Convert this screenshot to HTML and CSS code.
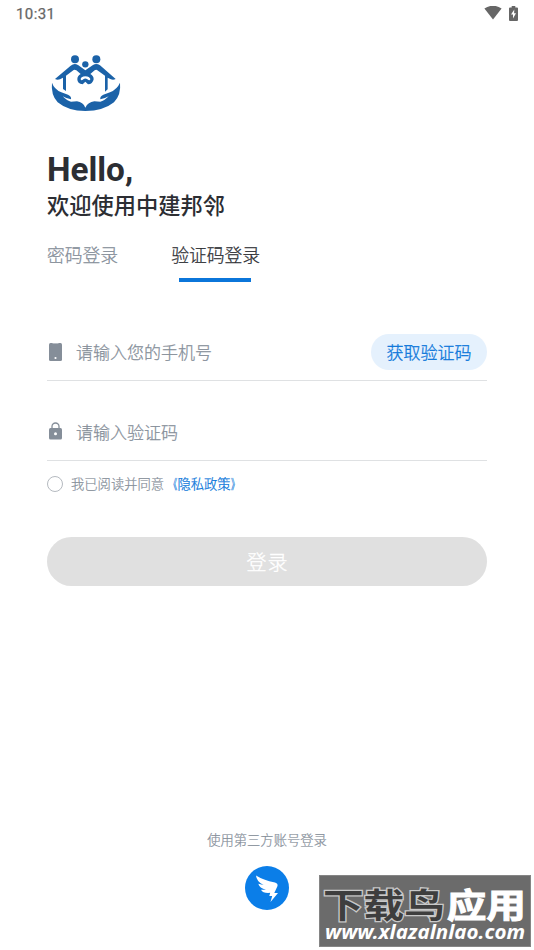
FILE: index.html
```html
<!DOCTYPE html>
<html lang="zh-CN">
<head>
<meta charset="utf-8">
<title>登录</title>
<link rel="stylesheet" href="styles.css">
</head>
<body>
<div class="screen">
  <header class="status">
    <span class="clock">10:31</span>
    <span class="status-icons">
      <svg width="18" height="14" viewBox="0 0 18 14"><path d="M.4 2.6Q9-3.2 17.6 2.6L9 13.6Z" fill="#666"/></svg>
      <svg width="9" height="15" viewBox="0 0 9 15"><path d="M2.7 0h3.6v1.4H8q1 0 1 1V14q0 1-1 1H1q-1 0-1-1V2.4q0-1 1-1h1.700Z" fill="#666"/><path d="M5.300 3.500 2 8.600h2v4L7 7.300H5.100Z" fill="#fff"/></svg>
    </span>
  </header>
  <main class="content">
    <svg class="logo" viewBox="30 24 216 180" fill="#1b62a8">
      <circle cx="105" cy="43" r="12"/><circle cx="169" cy="43" r="12"/><circle cx="136" cy="58" r="9.500"/>
      <path d="M45 102 92 62Q103 53 114 60L136 76 159 60Q169 53 180 61L227 102Q219 106 211 102L203 98V133L195 140V92L171 75Q168 73 164 76L151 87Q161 92 161 103Q158 118 144 118L136 110 128 118Q112 117 112 103Q112 92 122 87L109 76Q104 73 101 75L78 92V138L69 132V98L60 103Q52 106 45 102ZM136 94Q122 95 122 103Q124 109 130 103Q136 98 142 103Q150 109 151 102Q149 95 136 94Z" fill-rule="evenodd"/>
      <path d="M36 113Q42 132 64 142L84 149Q95 154 93 163Q82 162 68 154Q82 168 93 170Q103 169 111 169Q129 171 136 188Q144 171 163 169Q171 169 181 170Q192 168 206 154Q192 162 181 163Q179 154 190 149L210 142Q232 132 240 113Q244 148 222 172Q190 198 136 198Q84 198 53 172Q32 149 36 113Z"/>
    </svg>
    <h1 class="hello">Hello,</h1>
    <p class="welcome">欢迎使用中建邦邻</p>
    <nav class="tabs">
      <span class="tab">密码登录</span>
      <span class="tab active">验证码登录</span>
    </nav>
    <div class="field phone">
      <svg class="field-icon" viewBox="0 0 13 18"><path d="M1.500 0h10Q13 0 13 1.500v15q0 1.500-1.500 1.500h-10Q0 18 0 16.500v-15Q0 0 1.500 0Z" fill="#858e99"/><path d="M3.500 0h6v.8h-6Z" fill="#c4c9ce"/><circle cx="6.500" cy="15" r="1.100" fill="#fff"/></svg>
      <span class="placeholder">请输入您的手机号</span>
      <span class="get-code">获取验证码</span>
    </div>
    <div class="field code">
      <svg class="field-icon" viewBox="0 0 13 18"><path d="M3 7V4.500a3.500 3.500 0 0 1 7 0V7" fill="none" stroke="#858e99" stroke-width="1.300"/><rect y="6" width="13" height="11.500" rx="1.500" fill="#858e99"/><circle cx="6.500" cy="11.700" r="1.500" fill="#fff"/></svg>
      <span class="placeholder">请输入验证码</span>
    </div>
    <div class="agree">
      <span class="radio"></span>
      <span>我已阅读并同意<span class="link"><span class="mark open">《</span>隐私政策<span class="mark">》</span></span></span>
    </div>
    <div class="submit">登录</div>
  </main>
  <footer class="third">
    <span>使用第三方账号登录</span>
    <svg class="ding" viewBox="0 0 44 44"><circle cx="22" cy="22" r="22" fill="#0b7ee8"/><path d="M11 9.500Q18 14 30 16.500Q33.500 17.500 32.300 20.500L29.300 27H33L25.500 36L27.200 30H24.300L25.200 26.800Q18 27.500 16 23.700L21 23.800Q14.500 22 13.300 17.700L18.500 19Q11.500 15.500 11 9.500Z" fill="#fff"/></svg>
  </footer>
  <div class="watermark">
    <svg viewBox="0 0 212 72">
      <g class="wm-title">
        <text class="wm-dark" x="3" y="42" textLength="123" lengthAdjust="spacingAndGlyphs">下载鸟</text>
        <text class="wm-light" x="128" y="42" textLength="80" lengthAdjust="spacingAndGlyphs">应用</text>
      </g>
      <text class="wm-url" x="5" y="64" textLength="202" lengthAdjust="spacingAndGlyphs">www.xlazalnlao.com</text>
    </svg>
  </div>
</div>
</body>
</html>
```
FILE: styles.css
```css
* { box-sizing: border-box; }
body {
  margin: 0;
  background: #fff;
  color: #2c2e33;
  font-family: Roboto, "Noto Sans CJK SC", sans-serif;
  font-weight: 300;
}
svg { display: block; }
.screen {
  position: relative;
  display: flex;
  flex-direction: column;
  width: 534px;
  height: 950px;
  overflow: hidden;
}
.status {
  display: flex;
  justify-content: space-between;
  height: 28px;
  padding: 6px 16px 0;
  color: #666;
}
.clock { font-size: 15px; line-height: 17px; letter-spacing: .4px; font-weight: 400; -webkit-text-stroke: .25px; }
.status-icons { display: flex; gap: 7px; }
.content { padding: 25px 47px 0; }
.logo { width: 72px; height: 60px; margin-left: 3px; }
.hello { margin: 38px 0 0; font-size: 33.300px; line-height: 38px; font-weight: 700; }
.welcome { margin: 0; font-size: 22.250px; line-height: 34px; font-weight: 500; }
.tabs { display: flex; gap: 53px; height: 60px; margin-top: 17px; font-size: 17.800px; line-height: 32px; }
.tab { color: #858e99; -webkit-text-stroke: .25px; }
.tab.active { color: #2c2e33; }
.tab.active::after {
  content: "";
  display: block;
  width: 72px;
  height: 4px;
  margin: 6px 8px 0;
  background: #0b76da;
}
.field {
  display: flex;
  align-items: center;
  border-bottom: 1px solid #dfe1e3;
  color: #858e99;
  font-size: 17px;
}
.phone { height: 58px; margin-top: 23px; }
.code { height: 59px; margin-top: 21px; }
.field-icon { width: 13px; height: 18px; margin: 0 14px 0 2px; }
.placeholder { -webkit-text-stroke: .25px; }
.get-code {
  width: 116px;
  height: 36px;
  margin-left: auto;
  border-radius: 18px;
  background: #e5f1fd;
  color: #0b76da;
  line-height: 38px;
  text-align: center;
  -webkit-text-stroke: .3px;
}
.agree {
  display: flex;
  align-items: center;
  gap: 8px;
  height: 24px;
  margin-top: 11px;
  color: #858e99;
  font-size: 13.300px;
  line-height: 18px;
  -webkit-text-stroke: .2px;
}
.agree > span:last-child { margin-top: 1px; }
.radio { width: 16px; height: 16px; border: 1px solid #b5bac0; border-radius: 50%; }
.link { color: #0b76da; -webkit-text-stroke: .25px; }
.mark { display: inline-block; width: 13.300px; transform: scaleX(.6); transform-origin: left; }
.mark.open { transform-origin: right; }
.submit {
  height: 49px;
  margin-top: 41px;
  padding-left: 1px;
  border-radius: 25px;
  background: #e0e0e0;
  color: #fff;
  font-size: 20px;
  line-height: 53px;
  letter-spacing: 1px;
  text-align: center;
  -webkit-text-stroke: .35px;
}
.third {
  display: flex;
  flex-direction: column;
  align-items: center;
  gap: 15px;
  margin-top: auto;
  padding-bottom: 40px;
  color: #858e99;
  font-size: 13.300px;
  line-height: 20px;
  -webkit-text-stroke: .2px;
}
.ding { width: 44px; height: 44px; }
.watermark {
  position: absolute;
  left: 319px;
  top: 875px;
  width: 212px;
  height: 72px;
  background: #6b6b6b;
  border: 1px solid #858585;
}
.wm-title { font-family: "Noto Sans CJK SC", sans-serif; font-size: 35px; font-weight: 700; paint-order: stroke; }
.wm-dark { fill: #3e3e3e; stroke: #c8c8c8; stroke-width: 2.500px; }
.wm-light { fill: #fff; stroke: #fff; stroke-width: 1px; }
.wm-url { font-family: "Noto Sans", sans-serif; font-size: 20px; font-weight: 700; font-style: italic; fill: #fff; }
```
